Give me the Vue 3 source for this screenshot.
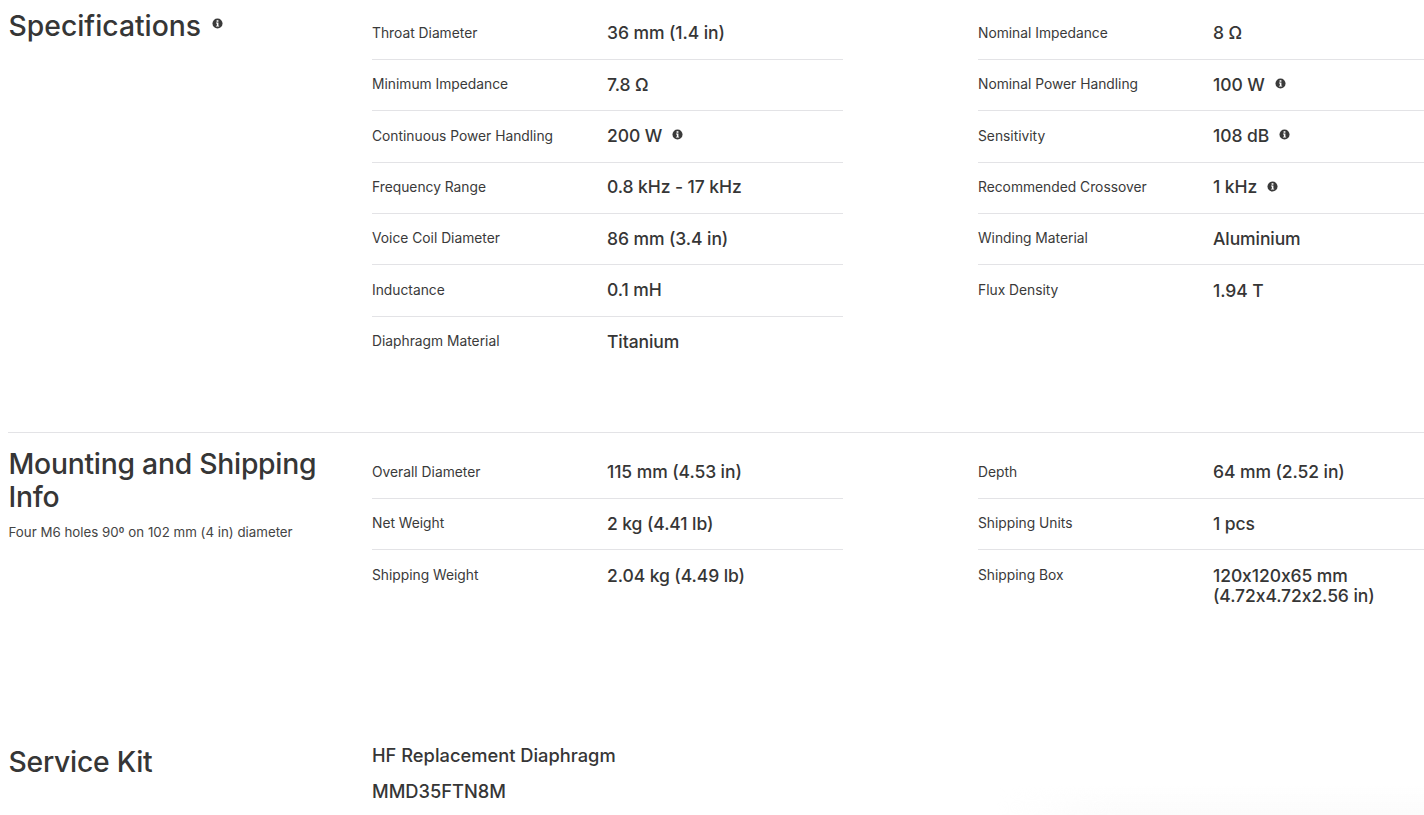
<script setup>
const sections = [
  {
    title: 'Specifications', info: true, note: '',
    left: [
      { l: 'Throat Diameter', v: '36 mm (1.4 in)' },
      { l: 'Minimum Impedance', v: '7.8 Ω' },
      { l: 'Continuous Power Handling', v: '200 W', info: true },
      { l: 'Frequency Range', v: '0.8 kHz - 17 kHz' },
      { l: 'Voice Coil Diameter', v: '86 mm (3.4 in)' },
      { l: 'Inductance', v: '0.1 mH' },
      { l: 'Diaphragm Material', v: 'Titanium' }
    ],
    right: [
      { l: 'Nominal Impedance', v: '8 Ω' },
      { l: 'Nominal Power Handling', v: '100 W', info: true },
      { l: 'Sensitivity', v: '108 dB', info: true },
      { l: 'Recommended Crossover', v: '1 kHz', info: true },
      { l: 'Winding Material', v: 'Aluminium' },
      { l: 'Flux Density', v: '1.94 T' }
    ]
  },
  {
    title: 'Mounting and Shipping Info', info: false, note: 'Four M6 holes 90º on 102 mm (4 in) diameter',
    left: [
      { l: 'Overall Diameter', v: '115 mm (4.53 in)' },
      { l: 'Net Weight', v: '2 kg (4.41 lb)' },
      { l: 'Shipping Weight', v: '2.04 kg (4.49 lb)' }
    ],
    right: [
      { l: 'Depth', v: '64 mm (2.52 in)' },
      { l: 'Shipping Units', v: '1 pcs' },
      { l: 'Shipping Box', v: '120x120x65 mm (4.72x4.72x2.56 in)' }
    ]
  }
]
</script>

<template>
  <div class="page">
    <section v-for="(s, i) in sections" :key="s.title" class="section" :class="i === 0 ? 'first' : 'second'">
      <div class="side">
        <h2 class="title">{{ s.title }}<svg v-if="s.info" class="info title-info" viewBox="0 0 12 12"><circle cx="6" cy="6" r="5.5" fill="#3a3a3a"/><rect x="5" y="2.4" width="2" height="1.7" fill="#fff"/><path d="M4.4 5h2.6v3.4h.8v1H4.3v-1h1V6h-.9z" fill="#fff"/></svg></h2>
        <p v-if="s.note" class="note">{{ s.note }}</p>
      </div>
      <div v-for="(col, c) in [s.left, s.right]" :key="c" class="col" :class="c === 1 ? 'col-right' : ''">
        <div v-for="r in col" :key="r.l" class="row">
          <span class="label">{{ r.l }}</span>
          <span class="value"><span class="value-text">{{ r.v }}</span><svg v-if="r.info" class="info" viewBox="0 0 12 12"><circle cx="6" cy="6" r="5.5" fill="#3a3a3a"/><rect x="5" y="2.4" width="2" height="1.7" fill="#fff"/><path d="M4.4 5h2.6v3.4h.8v1H4.3v-1h1V6h-.9z" fill="#fff"/></svg></span>
        </div>
      </div>
    </section>
    <section class="section kit">
      <div class="side"><h2 class="title">Service Kit</h2></div>
      <div class="kit-body">
        <div>HF Replacement Diaphragm</div>
        <div>MMD35FTN8M</div>
      </div>
    </section>
    <div class="glow"></div>
  </div>
</template>

<style>
html, body { margin: 0; background: #fff; overflow: hidden; }
</style>

<style scoped>
.page {
  position: relative;
  width: 1424px;
  height: 815px;
  overflow: hidden;
  background: #fff;
  color: #363636;
  font-family: Inter, "Liberation Sans", sans-serif;
  font-feature-settings: "calt" 0;
}
.section {
  display: grid;
  grid-template-columns: 364px 471px 581px;
  margin-left: 8px;
  width: 1416px;
  box-sizing: border-box;
}
.col-right { margin-left: 135px; }
.first { height: 432px; padding-top: 8.5px; box-sizing: border-box; }
.second { height: 288px; padding-top: 14.5px; border-top: 1px solid #e3e3e6; box-sizing: border-box; }
.kit { height: 95px; padding-top: 26px; }
.title {
  margin: 0;
  padding-left: 0.5px;
  font-size: 28.3px;
  line-height: 33px;
  font-weight: 500;
  letter-spacing: -0.25px;
  width: 340px;
}
.first .title { letter-spacing: 0; padding-top: 1px; }
.note {
  margin: 9px 0 0;
  padding-left: 0.5px;
  font-size: 13.3px;
  line-height: 18px;
  color: #444;
}
.row {
  display: flex;
  align-items: center;
  min-height: 51.4px;
  box-sizing: border-box;
  padding-bottom: 1.6px;
  border-bottom: 1px solid #e3e3e6;
}
.row:last-child { border-bottom: 0; align-items: flex-start; padding-top: 15.3px; }
.label {
  flex: 0 0 235px;
  font-size: 13.8px;
  line-height: 18px;
  color: #3a3a3a;
}
.value {
  display: flex;
  align-items: center;
  width: 196px;
  padding-top: 0.5px;
  font-size: 17.5px;
  line-height: 20px;
  font-weight: 500;
  letter-spacing: -0.08px;
}
.row:last-child .value { padding-top: 0; }
.info { width: 11px; height: 11px; flex: none; margin-left: 10px; margin-top: -2px; }
.title-info { display: inline-block; vertical-align: 7px; margin-left: 11px; margin-top: 0; }
.kit-body {
  grid-column: 2 / 4;
  font-size: 18.3px;
  font-weight: 500;
  line-height: 24px;
  display: flex;
  flex-direction: column;
  gap: 12px;
  margin-top: -3px;
}
.glow {
  position: absolute;
  right: 0;
  bottom: 0;
  width: 430px;
  height: 30px;
  background: linear-gradient(to bottom, rgba(250,250,250,0), #fbfbfb);
  -webkit-mask-image: linear-gradient(to right, transparent, #000 30%);
  mask-image: linear-gradient(to right, transparent, #000 30%);
  pointer-events: none;
}
</style>
